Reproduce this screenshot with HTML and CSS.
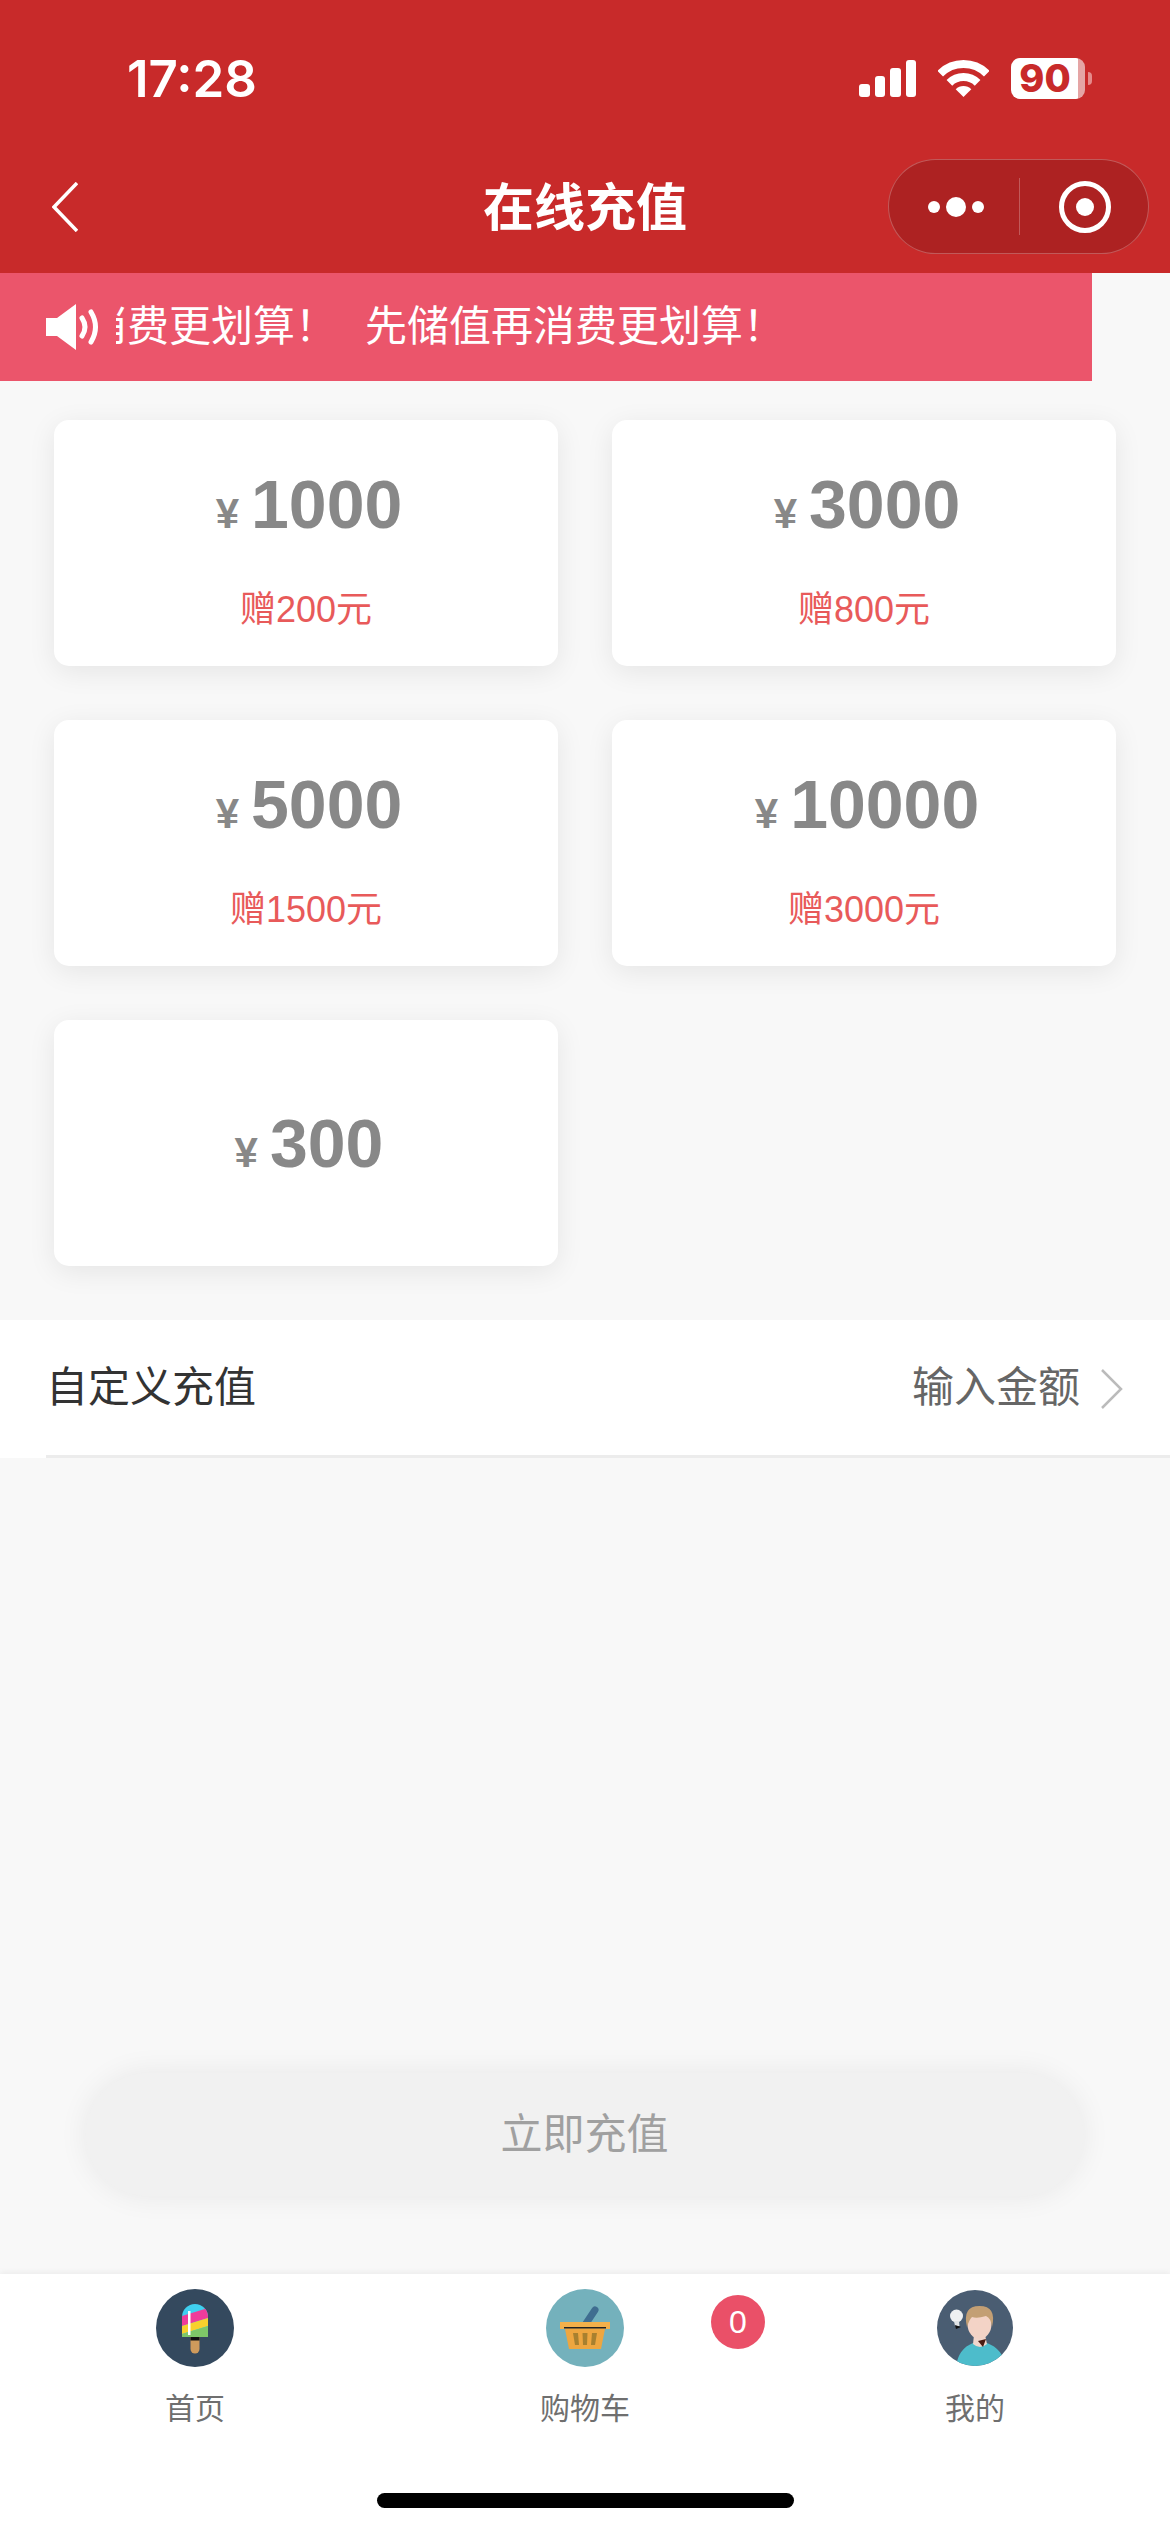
FILE: index.html
```html
<!DOCTYPE html>
<html lang="zh-CN">
<head>
  <meta charset="UTF-8" />
  <meta name="viewport" content="width=device-width, initial-scale=1.0"/>
  <title>在线充值</title>
  <link rel="stylesheet" href="styles.css">
</head>
<body>
  <header class="header">
    <div class="status">
      <span class="time">17:28</span>
      <div class="status-icons">
        <div class="signal"><i class="bar1"></i><i class="bar2"></i><i class="bar3"></i><i class="bar4"></i></div>
        <svg class="wifi" width="51" height="37" viewBox="0 0 51 37">
          <path d="M2.2 13.7A33 33 0 0 1 48.8 13.7" fill="none" stroke="#fff" stroke-width="8"/>
          <path d="M11.4 22.9A20 20 0 0 1 39.6 22.9" fill="none" stroke="#fff" stroke-width="8"/>
          <path d="M25.5 37L17.7 29.2A11 11 0 0 1 33.3 29.2Z" fill="#fff"/>
        </svg>
        <div class="battery"><span class="battery-level">90</span><i class="battery-tip"></i></div>
      </div>
    </div>
    <nav class="nav">
      <svg class="back" width="26" height="50" viewBox="0 0 26 50">
        <path d="M25 1L2 25L25 49" fill="none" stroke="#fff" stroke-width="3.5"/>
      </svg>
      <h1 class="title">在线充值</h1>
      <div class="capsule">
        <div class="capsule-dots"><i></i><i class="big"></i><i></i></div>
        <div class="capsule-line"></div>
        <div class="capsule-target"><i></i></div>
      </div>
    </nav>
  </header>

  <div class="notice">
    <svg class="speaker" width="56" height="46" viewBox="0 0 56 46">
      <path d="M0 14H11L30 0V46L11 32H0Z" fill="#fff"/>
      <path d="M36 14Q42 23 36 32" fill="none" stroke="#fff" stroke-width="5" stroke-linecap="round"/>
      <path d="M45 8Q54 23 45 38" fill="none" stroke="#fff" stroke-width="5" stroke-linecap="round"/>
    </svg>
    <div class="notice-clip">
      <div class="notice-track"><span>先储值再消费更划算！</span><span>先储值再消费更划算！</span></div>
    </div>
  </div>

  <main class="cards">
    <div class="card">
      <div class="amount"><span class="yen">¥</span>1000</div>
      <div class="gift">赠200元</div>
    </div>
    <div class="card">
      <div class="amount"><span class="yen">¥</span>3000</div>
      <div class="gift">赠800元</div>
    </div>
    <div class="card">
      <div class="amount"><span class="yen">¥</span>5000</div>
      <div class="gift">赠1500元</div>
    </div>
    <div class="card">
      <div class="amount"><span class="yen">¥</span>10000</div>
      <div class="gift">赠3000元</div>
    </div>
    <div class="card card-plain">
      <div class="amount"><span class="yen">¥</span>300</div>
    </div>
  </main>

  <div class="custom">
    <div class="custom-row">
      <span class="custom-label">自定义充值</span>
      <span class="custom-input">输入金额</span>
      <svg class="arrow" width="22" height="40" viewBox="0 0 22 40">
        <path d="M1 1L20 20L1 39" fill="none" stroke="#bbb" stroke-width="2.5"/>
      </svg>
    </div>
  </div>

  <button class="pay" type="button">立即充值</button>

  <footer class="tabbar">
    <div class="tab">
      <svg class="tab-icon" width="78" height="78" viewBox="0 0 78 78">
        <circle cx="39" cy="39" r="39" fill="#34495e"/>
        <defs><clipPath id="pop"><path d="M26 48V28A13 13 0 0 1 52 28V48Z"/></clipPath></defs>
        <path d="M34.5 48H43.5V60A4.5 4.5 0 0 1 34.5 60Z" fill="#cf9a5c"/>
        <rect x="34.5" y="48" width="9" height="3.5" fill="#111"/>
        <g clip-path="url(#pop)">
          <rect x="26" y="14" width="26" height="35" fill="#3fd0f0"/>
          <path d="M26 27L52 19V29L26 37Z" fill="#ef3b9b"/>
          <path d="M26 37L52 29V37L26 45Z" fill="#f7d02d"/>
          <path d="M26 45L52 37V49H26Z" fill="#7ec768"/>
        </g>
        <rect x="32" y="22" width="2.5" height="24" fill="#fff"/>
      </svg>
      <span class="tab-label">首页</span>
    </div>
    <div class="tab">
      <svg class="tab-icon" width="78" height="78" viewBox="0 0 78 78">
        <circle cx="39" cy="39" r="39" fill="#74b1bc"/>
        <path d="M39 36L49 21" fill="none" stroke="#3f6d90" stroke-width="7" stroke-linecap="round"/>
        <rect x="14" y="33" width="50" height="7" fill="#f3b04a"/>
        <path d="M19 40H59L55 60H23Z" fill="#eea640"/>
        <rect x="18" y="38" width="42" height="1.5" fill="#222"/>
        <path d="M27 44H32L33 56H29Z" fill="#a8802f"/>
        <path d="M36.5 44H41.5L41 56H37Z" fill="#a8802f"/>
        <path d="M46 44H51L49 56H45Z" fill="#a8802f"/>
      </svg>
      <span class="tab-label">购物车</span>
      <span class="badge">0</span>
    </div>
    <div class="tab">
      <svg class="tab-icon" width="78" height="78" viewBox="0 0 78 78">
        <defs><clipPath id="ava"><circle cx="39" cy="39" r="38"/></clipPath></defs>
        <circle cx="39" cy="39" r="38" fill="#4a5d72"/>
        <g clip-path="url(#ava)">
          <path d="M20 78Q22 60 37 54Q44 60 51 54Q67 60 70 78Z" fill="#4dbccb"/>
          <path d="M38 46H49L51 55Q44 61 37 55Z" fill="#f1d6cc"/>
        </g>
        <path d="M42 52L50 50L47 58Z" fill="#4a1a10"/>
        <ellipse cx="43.5" cy="35" rx="12" ry="15" fill="#f3d3c6"/>
        <path d="M31 38Q26 17 43.5 17Q61 17 56 38Q55 29 50 27Q41 30 36 28Q33 31 31 38Z" fill="#c39f74"/>
        <circle cx="20.5" cy="27" r="6.5" fill="#eef0f1"/>
        <path d="M18 32H23L23.5 37L19 37Z" fill="#dfe3e5"/>
        <path d="M19 36L25 38L20 40Z" fill="#111"/>
      </svg>
      <span class="tab-label">我的</span>
    </div>
    <div class="home-bar"></div>
  </footer>
</body>
</html>
```

FILE: styles.css
```css
* { box-sizing: border-box; }
body {
  font-family: 'Liberation Sans', 'Noto Sans CJK SC', sans-serif;
  background: #f8f8f8;
  margin: 0;
  padding: 0;
  width: 1170px;
  height: 2532px;
  overflow: hidden;
  display: flex;
  flex-direction: column;
}
i { display: block; }

/* header */
.header {
  background: #c82a2a;
  height: 273px;
  flex-shrink: 0;
}
.status {
  height: 159px;
  padding: 0 85px 3px 127px;
  display: flex;
  align-items: center;
  justify-content: space-between;
}
.time {
  font-family: 'Inter', sans-serif;
  font-weight: 600;
  font-size: 51px;
  color: #fff;
}
.status-icons {
  display: flex;
  align-items: center;
}
.signal {
  display: flex;
  align-items: flex-end;
  gap: 5px;
  height: 37px;
  margin-right: 22px;
}
.signal i {
  width: 10.5px;
  background: #fff;
  border-radius: 3px;
}
.bar1 { height: 13px; }
.bar2 { height: 21px; }
.bar3 { height: 29px; }
.bar4 { height: 37px; }
.wifi { margin-right: 22px; }
.battery {
  position: relative;
  width: 74px;
  height: 41px;
  border-radius: 9px;
  background: linear-gradient(90deg, #fff 90%, #e5a5a5 90%);
  text-align: center;
}
.battery-level {
  font-family: 'Inter', sans-serif;
  font-weight: 800;
  font-size: 38px;
  line-height: 41px;
  color: #c82a2a;
  padding-right: 6px;
}
.battery-tip {
  position: absolute;
  left: 77px;
  top: 14px;
  width: 4px;
  height: 13px;
  background: #e58a8a;
  border-radius: 0 6px 6px 0;
}
.nav {
  height: 95px;
  padding: 0 21px;
  display: grid;
  grid-template-columns: 1fr auto 1fr;
  align-items: center;
}
.back { margin-left: 31px; }
.title {
  margin: 0 0 5px;
  font-size: 51px;
  font-weight: 700;
  color: #fff;
}
.capsule {
  justify-self: end;
  width: 261px;
  height: 95px;
  background: #ad2222;
  border: 1.5px solid rgba(255,255,255,0.25);
  border-radius: 48px;
  display: flex;
  align-items: center;
}
.capsule-dots {
  width: 130px;
  display: flex;
  align-items: center;
  justify-content: center;
  gap: 6px;
  padding-left: 3px;
}
.capsule-dots i {
  width: 12px;
  height: 12px;
  background: #fff;
  border-radius: 50%;
}
.capsule-dots i.big {
  width: 20px;
  height: 20px;
}
.capsule-line {
  width: 1px;
  height: 57px;
  background: rgba(255,255,255,0.25);
}
.capsule-target {
  width: 52px;
  height: 52px;
  margin-left: 39px;
  border: 5.5px solid #fff;
  border-radius: 50%;
  display: flex;
  align-items: center;
  justify-content: center;
}
.capsule-target i {
  width: 18px;
  height: 18px;
  background: #fff;
  border-radius: 50%;
}

/* notice */
.notice {
  width: 1092px;
  height: 108px;
  flex-shrink: 0;
  background: #eb556b;
  padding-left: 46px;
  display: flex;
  align-items: center;
}
.notice-clip {
  flex: 1;
  margin-left: 14px;
  overflow: hidden;
}
.notice-track {
  display: flex;
  gap: 28px;
  margin-left: -199px;
  white-space: nowrap;
  font-size: 42px;
  line-height: 56px;
  color: #fff;
}

/* cards */
.cards {
  padding: 39px 54px 0;
  display: grid;
  grid-template-columns: 504px 504px;
  grid-auto-rows: 246px;
  gap: 54px;
}
.card {
  background: #fff;
  border-radius: 15px;
  box-shadow: 0 6px 28px rgba(0,0,0,0.08);
  padding-top: 49px;
  text-align: center;
}
.card-plain {
  padding-top: 88px;
}
.amount {
  padding-left: 6px;
  font-size: 68px;
  font-weight: 700;
  line-height: 70px;
  color: #888;
}
.yen {
  font-size: 42px;
  margin-right: 12px;
}
.gift {
  margin-top: 43px;
  font-size: 36px;
  line-height: 36px;
  color: #e85a5a;
}

/* custom amount */
.custom {
  margin-top: 54px;
  background: #fff;
  padding-left: 46px;
  flex-shrink: 0;
}
.custom-row {
  height: 138px;
  border-bottom: 3px solid #ececec;
  padding-right: 47px;
  display: flex;
  align-items: center;
}
.custom-label {
  flex: 1;
  margin-bottom: 9px;
  font-size: 42px;
  color: #333;
}
.custom-input {
  margin-bottom: 9px;
  font-size: 42px;
  color: #666;
}
.arrow {
  margin-left: 21px;
  margin-top: 3px;
}

/* button */
.pay {
  display: block;
  width: 997px;
  height: 123px;
  flex-shrink: 0;
  margin: auto 87px 78px 86px;
  padding-bottom: 9px;
  background: #f1f1f1;
  border: none;
  border-radius: 62px;
  box-shadow: 0 0 30px rgba(0,0,0,0.07);
  font-family: inherit;
  font-size: 42px;
  color: #a0a0a0;
}

/* tabbar */
.tabbar {
  position: relative;
  height: 258px;
  flex-shrink: 0;
  background: #fff;
  box-shadow: 0 -2px 6px rgba(0,0,0,0.05);
  display: grid;
  grid-template-columns: repeat(3, 390px);
}
.tab {
  position: relative;
  padding-top: 15px;
  display: flex;
  flex-direction: column;
  align-items: center;
}
.tab-label {
  margin-top: 24px;
  font-size: 30px;
  line-height: 36px;
  color: #6f6f6f;
}
.badge {
  position: absolute;
  left: 321px;
  top: 21px;
  width: 54px;
  height: 54px;
  border-radius: 50%;
  background: #ea5068;
  color: #fff;
  font-size: 32px;
  line-height: 54px;
  text-align: center;
}
.home-bar {
  position: absolute;
  left: 377px;
  bottom: 24px;
  width: 417px;
  height: 15px;
  background: #000;
  border-radius: 8px;
}
```
